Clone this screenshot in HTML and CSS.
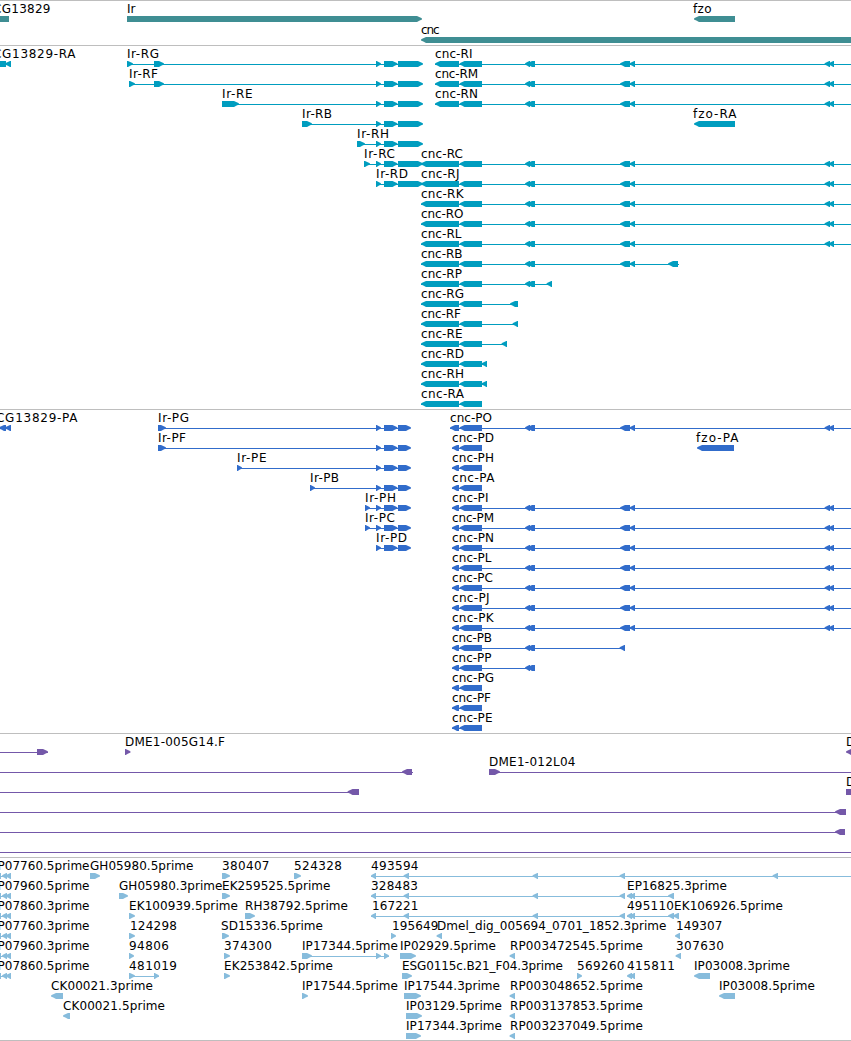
FILE: index.html
```html
<!DOCTYPE html>
<html lang="en">
<head>
<meta charset="utf-8">
<title>Genome browser</title>
<link rel="stylesheet" href="styles.css">
</head>
<body>
<main class="browser">
<section class="track track-gene" data-height="45" data-pitch="21"></section>
<section class="track track-transcript" data-height="364" data-pitch="20"></section>
<section class="track track-cds" data-height="324" data-pitch="20"></section>
<section class="track track-bac" data-height="124" data-pitch="20"></section>
<section class="track track-cdna" data-height="183" data-pitch="20"></section>
</main>
<script src="tracks.js"></script>
</body>
</html>
```

FILE: styles.css
```css
body {
  margin: 0;
  background: #fff;
}

.browser {
  display: flex;
  flex-direction: column;
  width: 851px;
  overflow: hidden;
  border-bottom: 1px solid #bebebe;
}

.track {
  box-sizing: border-box;
  border-top: 1px solid #bebebe;
  overflow: hidden;
}

.track-gene { color: #3f8e93; }
.track-transcript { color: #009dbf; }
.track-cds { color: #316ccb; }
.track-bac { color: #7458a9; }
.track-cdna { color: #87bcdc; }

.canvas {
  display: block;
}

.exon,
.intron {
  fill: currentColor;
}

.intron {
  shape-rendering: crispEdges;
}

.label {
  fill: #000;
  font: 12px "DejaVu Sans", "Noto Sans", sans-serif;
}
```

FILE: tracks.js
```js
// Feature: [row, label, label left, label right, direction, exons, intron span]
const far = [[525, 530], [527, 535], [620, 630], [629.5, 635], [824.5, 830], [828.5, 834]];
const near = far.slice(0, 2);
const mid = far.slice(0, 4);

const gene = [
  [0, 'CG13829', -6, 50, 0, [[-20, 9]]],
  [0, 'Ir', 128, 135, 1, [[127, 422]]],
  [0, 'fzo', 694, 711, -1, [[694, 735]]],
  [1, 'cnc', 422, 439, -1, [[421, 900]]]
];

const transcript = [
  [0, 'CG13829-RA', -6, 75, -1, [[-20, 6], [5, 11]]],
  [3, 'fzo-RA', 694, 736, -1, [[694, 735]]]
];
const irTail = [[376, 381], [384, 397.5], [398, 423]];
[
  [0, 'G', 128, 158.5, [[127, 133], [154, 164]]],
  [1, 'F', 130, 157.5, [[129, 135], [154, 164]]],
  [2, 'E', 223, 252, [[222, 239]]],
  [3, 'B', 303, 331.5, [[302, 312]]],
  [4, 'H', 358, 388.5, [[357, 365]]],
  [5, 'C', 365, 394.5, [[364, 370]]],
  [6, 'D', 377, 407.5, []]
].forEach(([row, id, left, right, head]) => {
  const exons = [...head, ...irTail];
  transcript.push([row, 'Ir-R' + id, left, right, 1, exons, [exons[0][0], 422]]);
});
[
  [0, 'I', 472], [1, 'M', 477.5], [2, 'N', 477.5], [5, 'C', 462.5], [6, 'J', 459],
  [7, 'K', 463], [8, 'O', 463], [9, 'L', 461],
  [10, 'B', 462, [...mid, [668, 678]], 679],
  [11, 'P', 461.5, [...near, [546.5, 552]], 552],
  [12, 'G', 463.5, [[510, 518]], 518],
  [13, 'F', 460.5, [[512.5, 518]], 518],
  [14, 'E', 462, [[501.5, 507]], 507],
  [15, 'D', 463.5, [[481.5, 487]], 487],
  [16, 'H', 463.5, [[481.5, 487]], 487],
  [17, 'A', 463.5, [], 482]
].forEach(([row, id, right, tail = far, end = 851]) => {
  const start = row < 3 ? 435 : 421;
  transcript.push([row, 'cnc-R' + id, start + 1, right, -1,
    [[start, 459], [459.5, 482], ...tail], [start, end]]);
});

const cds = [
  [0, 'CG13829-PA', -3, 77, -1, [[-1, 6], [5, 11]]],
  [1, 'fzo-PA', 697, 738, -1, [[697, 734]]]
];
const cdsTail = [[376, 381], [384, 397.5], [398, 411]];
[
  [0, 'G', 159, 188.5, [[158, 166]]],
  [1, 'F', 159, 185.5, [[158, 166]]],
  [2, 'E', 238, 266, [[237, 242]]],
  [3, 'B', 311, 338.5, [[310, 315]]],
  [4, 'H', 366, 395.5, [[365, 370]]],
  [5, 'C', 366, 394.5, [[365, 370]]],
  [6, 'D', 377, 406.5, []]
].forEach(([row, id, left, right, head]) => {
  const exons = [...head, ...cdsTail];
  cds.push([row, 'Ir-P' + id, left, right, 1, exons, [exons[0][0], 410]]);
});
[
  ['O', 491.5, far], ['D', 493.5, []], ['H', 493.5, []], ['A', 494, []],
  ['I', 488, far], ['M', 493.5, far], ['N', 493.5, far], ['L', 491, far],
  ['C', 492.5, far], ['J', 489, far], ['K', 493, far],
  ['B', 491.5, [...near, [619.5, 625]], 625], ['P', 491, near, 535],
  ['G', 493.5, []], ['F', 490.5, []], ['E', 492, []]
].forEach(([id, right, tail, end], row) => {
  const start = row ? 452 : 450;
  cds.push([row, 'cnc-P' + id, start + 1, right, -1,
    [[start, 459], [459.5, 482], ...tail],
    [start, end || (tail.length ? 851 : 482)]]);
});

const bac = [
  [0, '', 0, 0, 1, [[37, 48]], [0, 48]],
  [0, 'DME1-005G14.F', 126, 224.5, 1, [[125, 130.5]]],
  [0, 'D', 847, 855, -1, [[846, 860]]],
  [1, '', 0, 0, -1, [[402, 412]], [0, 413]],
  [1, 'DME1-012L04', 490, 575, 1, [[489, 500]], [489, 851]],
  [2, '', 0, 0, -1, [[347.5, 359]], [0, 359]],
  [2, 'D', 847, 855, 1, [[846, 870]]],
  [3, '', 0, 0, -1, [[835, 846]], [0, 846]],
  [4, '', 0, 0, -1, [[835, 845]], [0, 845]],
  [5, '', 0, 0, 0, [], [0, 851]]
];

const cdna = [
  ...['EP07760.5prime', 'EP07960.5prime', 'EP07860.3prime', 'EP07760.3prime',
    'EP07960.3prime', 'EP07860.5prime'].map((name, row) =>
    [row, name, -9, 89, -1, [[-6, 1], [2, 7], [5.5, 11]], [0, 11]]),
  [0, 'GH05980.5prime', 91, 193, 1, [[90, 100]]],
  [0, '380407', 223, 269, 1, [[222, 230]]],
  [0, '524328', 295, 341.5, 1, [[294, 301]]],
  [0, '493594', 372, 418, -1, [[371, 376], [403.5, 409], [532.5, 538], [619.5, 625], [772.5, 778]], [371, 851]],
  [1, 'GH05980.3prime', 120, 222, 1, [[119, 128]]],
  [1, 'EK259525.5prime', 223, 330, 1, [[222, 230]]],
  [1, '328483', 372, 417.5, -1, [[371, 376], [403.5, 409], [532.5, 538], [619.5, 625]], [371, 625]],
  [1, 'EP16825.3prime', 628, 726.5, -1, [[627, 632], [629.5, 635], [668, 674]], [627, 674]],
  [2, 'EK100939.5prime', 130, 237.5, 1, [[129, 135]]],
  [2, 'RH38792.5prime', 246, 347.5, 1, [[245, 255]]],
  [2, '167221', 373, 418, -1, [[371, 376], [403.5, 409], [532.5, 538], [619.5, 625]], [371, 625]],
  [2, '495110', 628, 673.5, -1, [[627, 632], [629.5, 635], [668, 674]], [627, 674]],
  [2, 'EK106926.5prime', 675, 782.5, -1, [[673, 679]]],
  [3, '124298', 131, 176.5, 1, [[129, 135]]],
  [3, 'SD15336.5prime', 222, 322.5, 1, [[222, 229]]],
  [3, '195649', 393, 438, 1, [[391, 396]]],
  [3, 'Dmel_dig_005694_0701_1852.3prime', 438, 666, -1, [[436.5, 442]]],
  [3, '149307', 677, 722, -1, [[675, 680]]],
  [4, '94806', 130, 168.5, 1, [[129, 134]]],
  [4, '374300', 225, 271.5, 1, [[224, 230]]],
  [4, 'IP17344.5prime', 303, 397.5, 1, [[302, 312], [376, 381], [384, 389]], [302, 389]],
  [4, 'IP02929.5prime', 401, 495.5, 1, [[400, 416]]],
  [4, 'RP003472545.5prime', 511, 642.5, -1, [[509.5, 515]]],
  [4, '307630', 677, 723.5, -1, [[675.5, 681]]],
  [5, '481019', 130, 176.5, 1, [[129, 135], [154, 159]], [129, 159]],
  [5, 'EK253842.5prime', 225, 332.5, 1, [[224, 230]]],
  [5, 'ESG0115c.B21_F04.3prime', 403, 562.5, 1, [[402, 412]]],
  [5, '569260', 578, 624, 1, [[577, 582]]],
  [5, '415811', 628, 674.5, -1, [[627, 632], [629.5, 635]]],
  [5, 'IP03008.3prime', 695, 789.5, -1, [[694, 710]]],
  [6, 'CK00021.3prime', 52, 152.5, -1, [[51, 63]]],
  [6, 'IP17544.5prime', 303, 397.5, 1, [[302, 308]]],
  [6, 'IP17544.3prime', 405, 499.5, 1, [[404, 421]]],
  [6, 'RP003048652.5prime', 511, 642.5, -1, [[509.5, 515]]],
  [6, 'IP03008.5prime', 720, 814.5, -1, [[719, 735]]],
  [7, 'CK00021.5prime', 64, 164.5, -1, [[63, 70]]],
  [7, 'IP03129.5prime', 407, 501.5, 1, [[406, 422]]],
  [7, 'RP003137853.5prime', 511, 642.5, -1, [[509.5, 515]]],
  [8, 'IP17344.3prime', 407, 501.5, 1, [[406, 421]]],
  [8, 'RP003237049.5prime', 511, 642.5, -1, [[509.5, 515]]]
];

const NS = 'http://www.w3.org/2000/svg';

function add(parent, tag, attributes, text) {
  const node = document.createElementNS(NS, tag);
  for (const key in attributes) node.setAttribute(key, attributes[key]);
  if (text) node.textContent = text;
  parent.appendChild(node);
  return node;
}

// Block with a pointed, slightly rounded end in the direction of the strand.
function exonPoints(left, right, direction, top) {
  const bottom = top + 6;
  if (!direction) return `${left},${top} ${right},${top} ${right},${bottom} ${left},${bottom}`;
  const width = right - left;
  const head = Math.min(5, width - 0.7);
  const tip = direction > 0 ? right : left;
  const back = direction > 0 ? left : right;
  const neck = tip - direction * head;
  const cheek = tip - direction * head * 0.45;
  return `${back},${top} ${neck},${top} ${cheek},${top + 1.2} ${tip},${top + 2.4} ` +
    `${tip},${top + 3.4} ${cheek},${top + 4.6} ${neck},${bottom} ${back},${bottom}`;
}

const data = [gene, transcript, cds, bac, cdna];
document.querySelectorAll('.track').forEach((track, index) => {
  const height = Number(track.dataset.height);
  const pitch = Number(track.dataset.pitch);
  const canvas = add(track, 'svg', {
    class: 'canvas', width: 851, height: height - 1, viewBox: `0 1 851 ${height - 1}`
  });
  for (const [row, name, left, right, direction, exons, span] of data[index]) {
    const offset = row * pitch;
    if (span) {
      add(canvas, 'rect', { class: 'intron', x: span[0], y: offset + 19, width: span[1] - span[0], height: 1 });
    }
    for (const [from, to] of exons) {
      add(canvas, 'polygon', { class: 'exon', points: exonPoints(from, to, direction, offset + 16) });
    }
    if (name) {
      add(canvas, 'text', {
        class: 'label', x: left - 1, y: offset + 13, textLength: right - left + 1.5
      }, name);
    }
  }
});
```
